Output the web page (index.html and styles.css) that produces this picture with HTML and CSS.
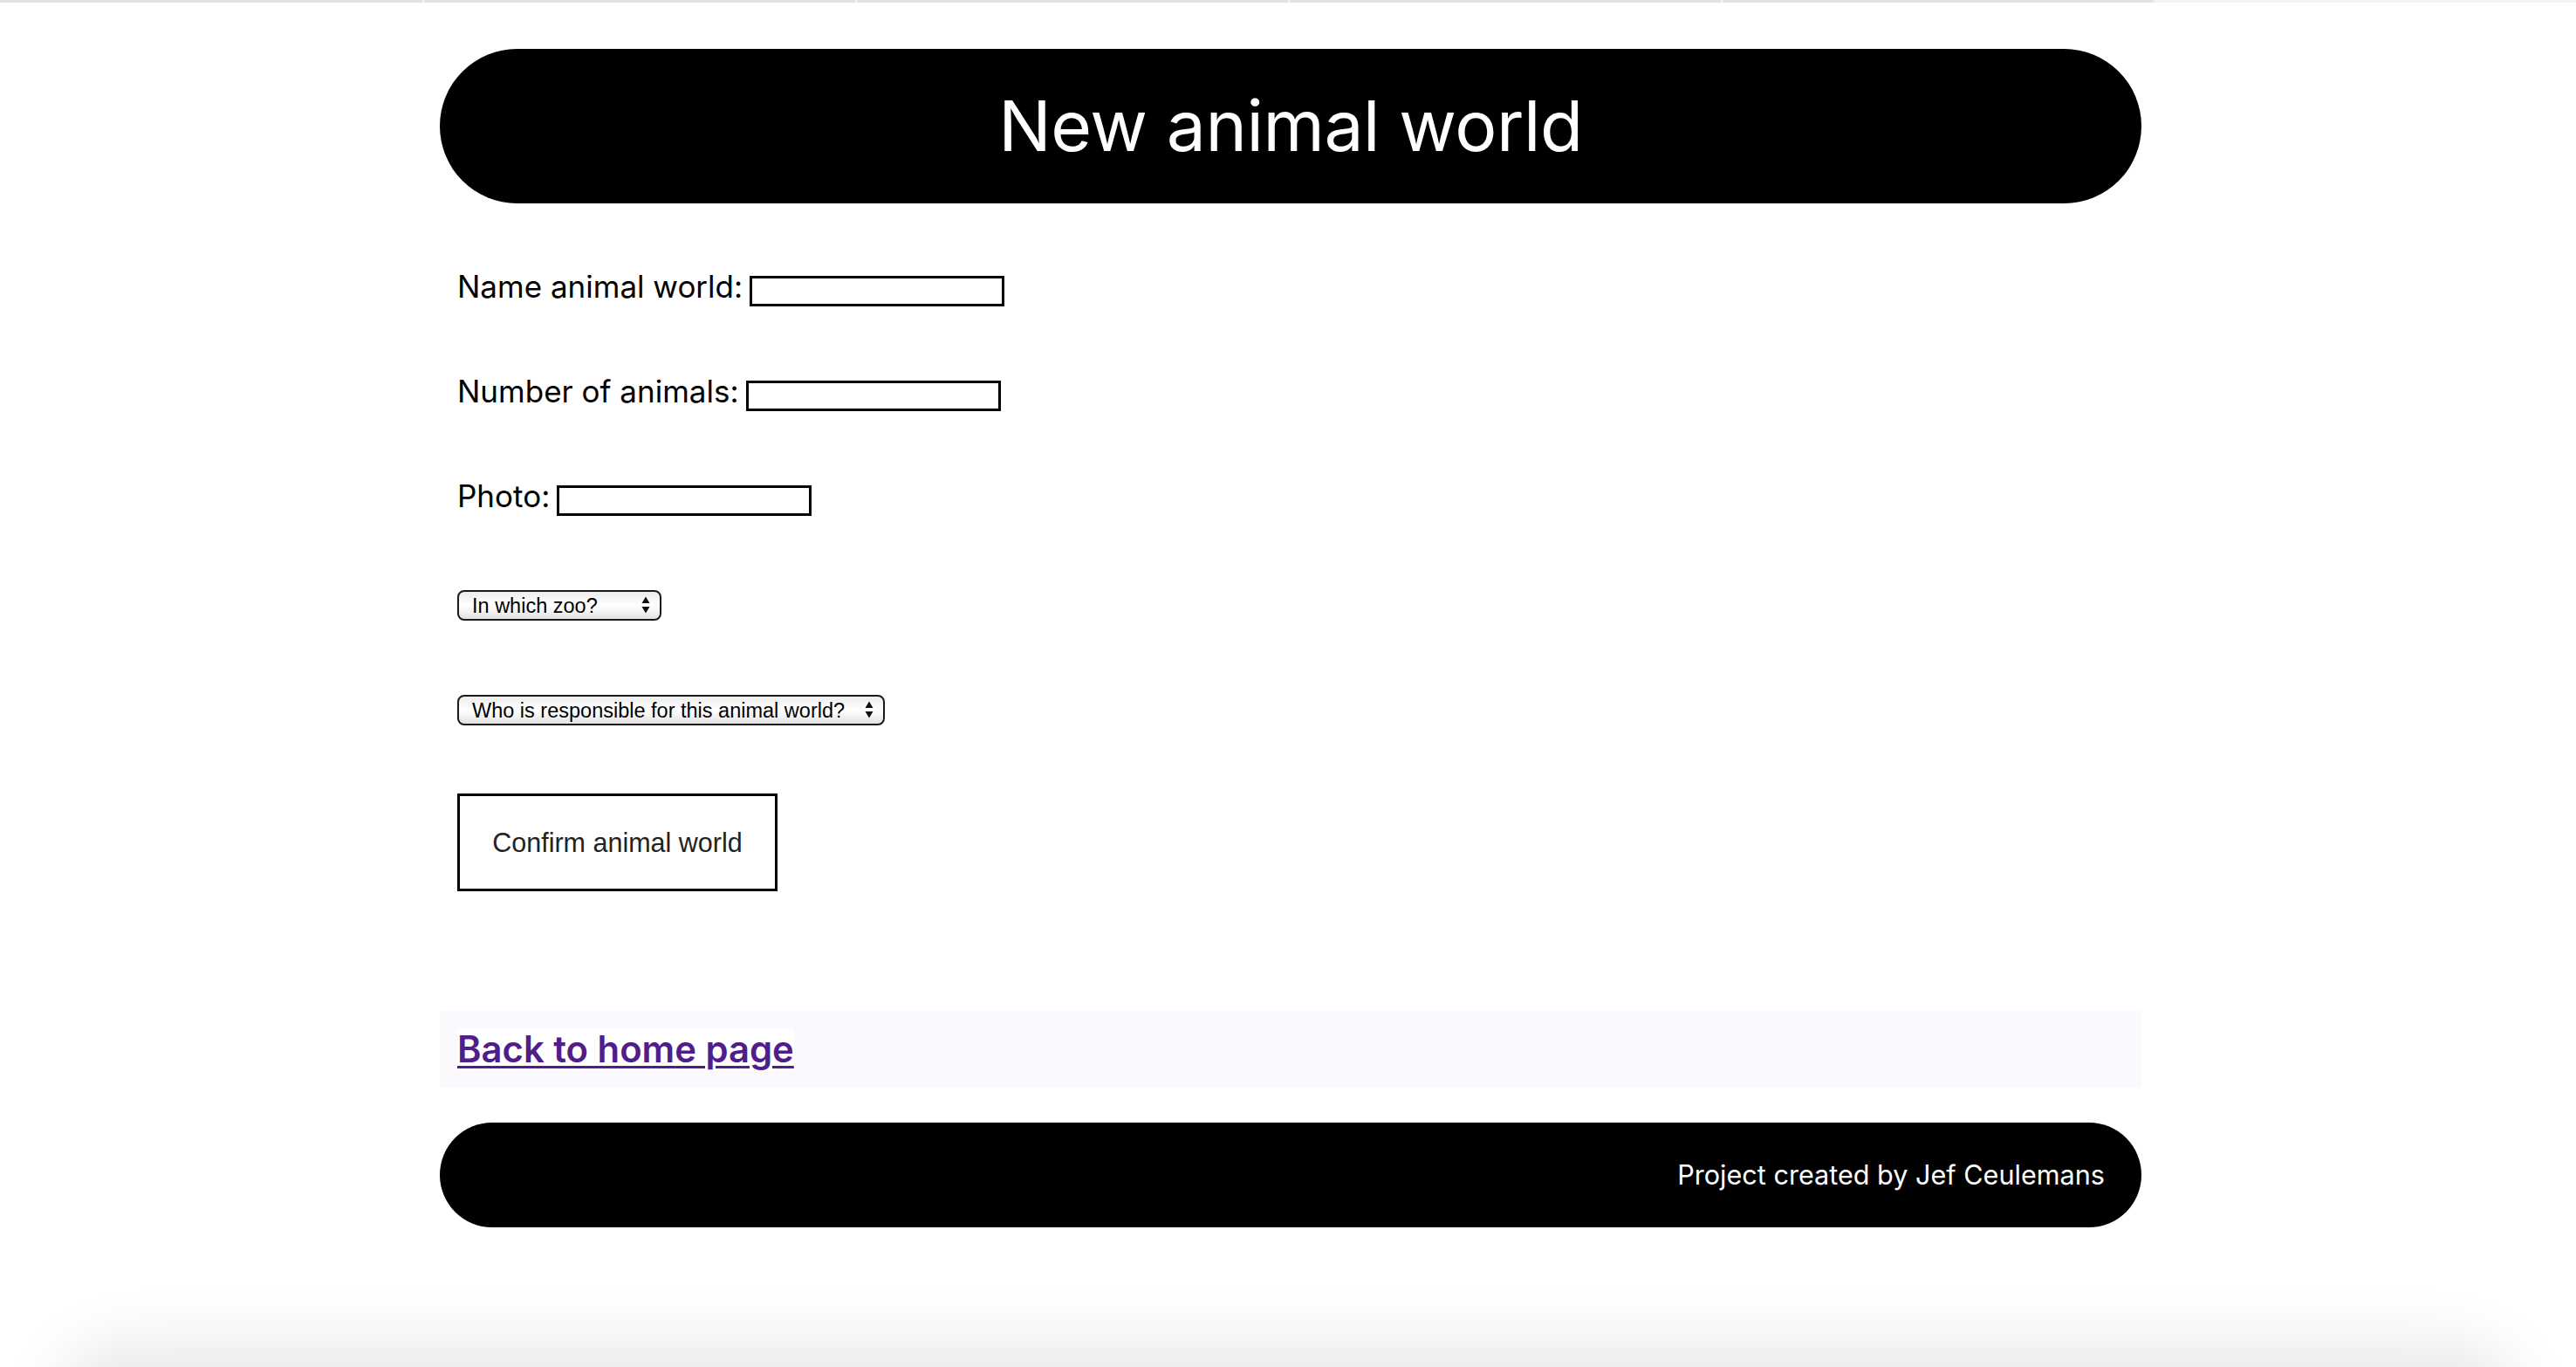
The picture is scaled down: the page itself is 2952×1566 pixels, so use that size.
FILE: index.html
```html
<!DOCTYPE html>
<html lang="en">
<head>
<meta charset="utf-8">
<title>New animal world</title>
<link rel="stylesheet" href="styles.css">
</head>
<body>
<div class="tabstrip">
  <span class="tab"></span><span class="tab"></span><span class="tab"></span><span class="tab"></span><span class="tab"></span><span class="tab tab-active"></span>
</div>
<div class="page">
  <header class="hero">
    <h1 class="hero-title">New animal world</h1>
  </header>

  <form class="world-form">
    <div class="field">
      <label class="field-label" for="name">Name animal world:</label>
      <input class="field-input" id="name" type="text">
    </div>
    <div class="field">
      <label class="field-label" for="count">Number of animals:</label>
      <input class="field-input" id="count" type="text">
    </div>
    <div class="field">
      <label class="field-label" for="photo">Photo:</label>
      <input class="field-input" id="photo" type="text">
    </div>
    <div class="field">
      <div class="select-wrap select-zoo">
        <select class="field-select">
          <option>In which zoo?</option>
        </select>
        <svg class="select-arrows" viewBox="0 0 10 22" width="10" height="22" aria-hidden="true">
          <path d="M0.5 9 L5 1.5 L9.5 9 Z M0.5 13 L5 20.5 L9.5 13 Z" fill="#111"/>
        </svg>
      </div>
    </div>
    <div class="field">
      <div class="select-wrap select-keeper">
        <select class="field-select">
          <option>Who is responsible for this animal world?</option>
        </select>
        <svg class="select-arrows" viewBox="0 0 10 22" width="10" height="22" aria-hidden="true">
          <path d="M0.5 9 L5 1.5 L9.5 9 Z M0.5 13 L5 20.5 L9.5 13 Z" fill="#111"/>
        </svg>
      </div>
    </div>
    <div class="actions">
      <button class="confirm-btn" type="button">Confirm animal world</button>
    </div>
  </form>

  <nav class="back-band">
    <a class="back-link" href="#">Back to home page</a>
  </nav>

  <footer class="site-footer">
    <p class="footer-text">Project created by Jef Ceulemans</p>
  </footer>
</div>
<div class="bottom-shade"></div>
</body>
</html>
```

FILE: styles.css
```css
html, body {
  margin: 0;
  padding: 0;
  background: #ffffff;
}

body {
  font-family: Inter, "Open Sans", "Liberation Sans", sans-serif;
  color: #000;
}

.tabstrip {
  display: flex;
  height: 3px;
}

.tab {
  flex: 0 0 496px;
  background: #e3e3e3;
  border-right: 2px solid #f2f2f2;
  box-sizing: border-box;
}

.tab:first-child {
  flex-basis: 486px;
}

.tab-active {
  flex: 1 1 auto;
  background: #f3f3f3;
  border-right: 0;
}

.page {
  width: 1950px;
  margin: 0 auto;
  position: relative;
  left: 3px;
}

.hero {
  margin-top: 53px;
  height: 177px;
  background: #000;
  border-radius: 89px;
  display: flex;
  align-items: center;
  justify-content: center;
}

.hero-title {
  margin: 0;
  color: #fff;
  font-size: 80.3px;
  font-weight: 400;
  line-height: 1;
  letter-spacing: -0.005em;
}

.world-form {
  margin-top: 83px;
  padding-left: 20px;
  display: flex;
  flex-direction: column;
  gap: 85px;
}

.field {
  display: flex;
  align-items: flex-start;
  gap: 8px;
  height: 35px;
}

.field-label {
  font-size: 35px;
  line-height: 25px;
  white-space: nowrap;
}

.field-input {
  width: 292px;
  height: 35px;
  box-sizing: border-box;
  border: 3px solid #000;
  margin: 0;
  padding: 0 4px;
  background: #fff;
}

.select-wrap {
  position: relative;
  height: 35px;
}

.select-zoo { width: 234px; }
.select-keeper { width: 490px; }

.field-select {
  appearance: none;
  -webkit-appearance: none;
  width: 100%;
  height: 35px;
  box-sizing: border-box;
  margin: 0;
  padding: 0 0 0 15px;
  border: 2px solid #1a1a1a;
  border-radius: 8px;
  background: linear-gradient(#ececec 0%, #fafafa 35%, #ffffff 50%, #f1f1f1 75%, #e2e2e2 100%);
  font-family: "Liberation Sans", Arial, sans-serif;
  font-size: 23.5px;
  color: #000;
}

.select-arrows {
  position: absolute;
  right: 13px;
  top: 6px;
  pointer-events: none;
}

.actions {
  margin-top: -7px;
}

.confirm-btn {
  width: 367px;
  height: 112px;
  box-sizing: border-box;
  border: 3px solid #000;
  background: #fff;
  font-family: "Liberation Sans", Arial, sans-serif;
  font-size: 30.5px;
  color: #222;
  padding: 0;
  margin: 0;
}

.back-band {
  margin-top: 137px;
  height: 88px;
  box-sizing: border-box;
  padding: 20px;
  background: #fbf9fe;
}

.back-link {
  display: inline-block;
  height: 48px;
  line-height: 48px;
  background: #fff;
  color: #511d8a;
  font-size: 41.8px;
  font-weight: 600;
  text-decoration: underline;
  text-decoration-thickness: 3px;
  text-underline-offset: 4px;
}

.site-footer {
  margin-top: 40px;
  height: 120px;
  background: #000;
  border-radius: 60px;
  display: flex;
  align-items: center;
  justify-content: flex-end;
  padding-right: 42px;
  box-sizing: border-box;
}

.footer-text {
  margin: 0;
  color: #fff;
  font-size: 30.6px;
  line-height: 1;
}

.bottom-shade {
  position: fixed;
  left: 90px;
  right: 90px;
  bottom: -220px;
  height: 220px;
  border-radius: 60px;
  box-shadow: 0 0 70px 30px rgba(0, 0, 0, 0.09);
  pointer-events: none;
}
```
